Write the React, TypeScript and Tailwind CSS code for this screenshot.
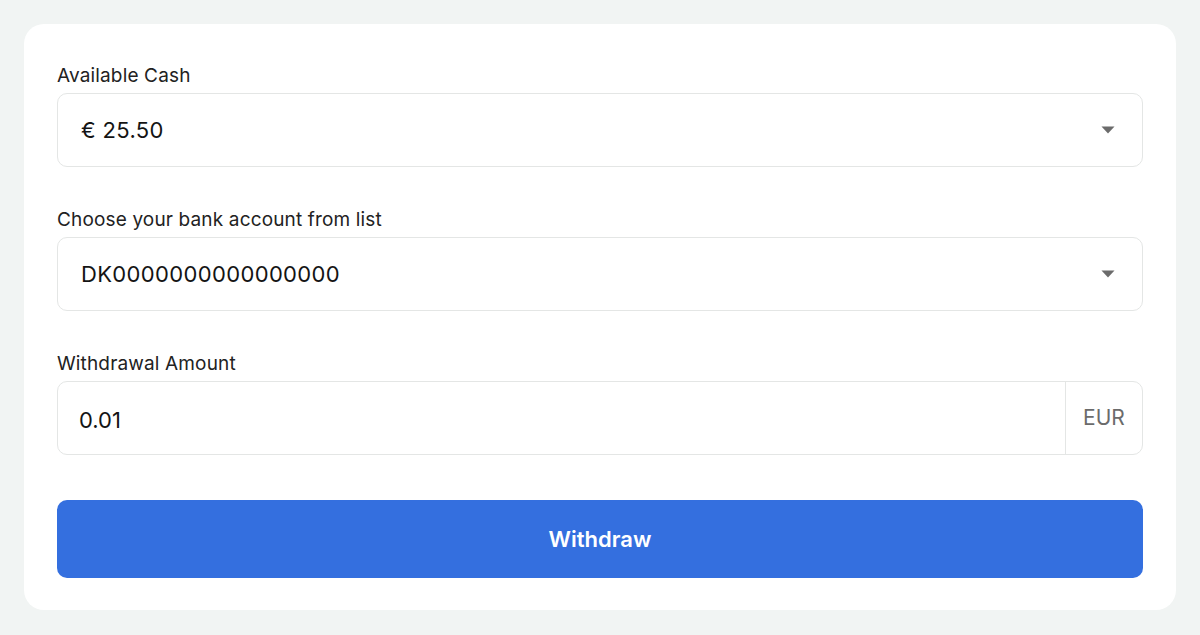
const Caret = () => (
  <svg width="14" height="8" viewBox="0 0 14 8" className="shrink-0">
    <path d="M0.5 0.5 L13.5 0.5 L7 7.5 Z" fill="#6b6b6b" />
  </svg>
);

const SelectBox = ({ value }: { value: string }) => (
  <div className="flex h-[74px] items-center justify-between rounded-[10px] border border-[#e4e6e5] pl-[23px] pr-[27px]">
    <span className="text-[22px] tracking-[0.35px] text-[#141414]">{value}</span>
    <Caret />
  </div>
);

const Label = ({ children }: { children: string }) => (
  <div className="mb-[6px] h-[24px] text-[19px] leading-[26px] tracking-[0.15px] text-[#222]">{children}</div>
);

export default function App() {
  return (
    <div
      className="min-h-[635px] bg-[#f1f4f3] p-6"
      style={{ fontFamily: 'Inter, "Noto Sans", sans-serif' }}
    >
      <div className="rounded-[20px] bg-white px-[33px] pt-[39px] pb-[32px]">
        <Label>Available Cash</Label>
        <SelectBox value="€ 25.50" />

        <div className="mt-[40px]">
          <Label>Choose your bank account from list</Label>
          <SelectBox value="DK0000000000000000" />
        </div>

        <div className="mt-[40px]">
          <Label>Withdrawal Amount</Label>
          <div className="flex h-[74px] rounded-[10px] border border-[#e4e6e5]">
            <div className="flex flex-1 items-center pl-[21px] pt-[5px] text-[22px] text-[#141414]">0.01</div>
            <div className="flex w-[77px] items-center justify-center border-l border-[#e4e6e5] text-[21px] text-[#6b6b6b]">
              EUR
            </div>
          </div>
        </div>

        <button className="mt-[45px] flex h-[78px] w-full items-center justify-center rounded-[10px] bg-[#346fdf] text-[22px] font-semibold text-white">
          Withdraw
        </button>
      </div>
    </div>
  );
}
